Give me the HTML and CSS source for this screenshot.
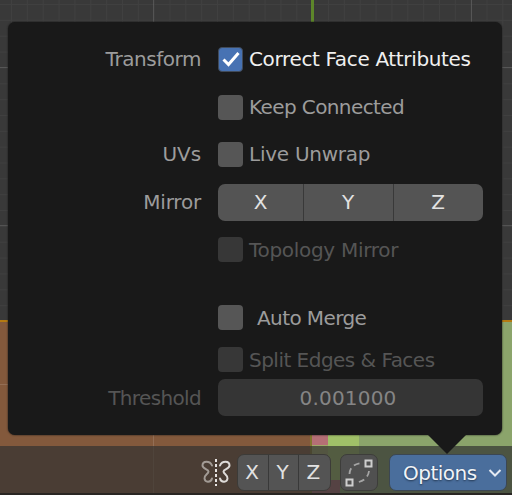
FILE: index.html
```html
<!DOCTYPE html>
<html lang="en">
<head>
<meta charset="utf-8">
<title>Options</title>
<link rel="stylesheet" href="styles.css">
</head>
<body>
<div class="viewport">
  <svg class="scene" width="512" height="495" viewBox="0 0 512 495" shape-rendering="crispEdges" aria-hidden="true">
    <defs>
      <pattern id="minor" x="11" y="4" width="15.85" height="15.85" patternUnits="userSpaceOnUse">
        <path d="M0 .5H15.85M.5 0V15.85" stroke="#fff" stroke-opacity=".035" fill="none"/>
      </pattern>
    </defs>
    <rect width="512" height="495" fill="#393939"/>
    <rect y="321" width="311" height="174" fill="#83593c"/>
    <rect x="311" y="321" width="201" height="174" fill="#8ba46b"/>
    <rect x="328" y="430" width="31" height="50" fill="#a0c068"/>
    <rect x="312" y="430" width="16" height="15" fill="#b56f75"/>
    <rect x="312" y="445" width="16" height="35" fill="#a0a868"/>
    <rect x="310" y="430" width="2" height="65" fill="#84752f"/>
    <rect x="312" y="480" width="28" height="15" fill="#a86a70"/>
    <rect width="512" height="320" fill="url(#minor)"/>
    <path d="M0 320.5H512" stroke="#b47a12" stroke-width="2"/>
    <path d="M153.5 0V495M471.5 0V320M0 67.5H512M0 225.5H512M0 384.5H8" stroke="#fff" stroke-opacity=".13" fill="none"/>
    <path d="M312 0V30" stroke="#5d862a" stroke-width="3"/>
  </svg>

  <footer class="toolbar">
    <svg class="butterfly" width="30" height="30" viewBox="0 0 30 30" fill="none" stroke-width="2" stroke-linecap="round" aria-hidden="true">
      <path d="M11 7.500C9 2.500 1.500 2.500 1.500 7.500C1.500 11 7.500 11 7.500 13.500C7.500 16 3 17 3.500 20.500C4 25 10 24.500 11 20.500" stroke="#a29b95"/>
      <path d="M19 7.500C21 2.500 28.500 2.500 28.500 7.500C28.500 11 22.500 11 22.500 13.500C22.500 16 27 17 26.500 20.500C26 25 20 24.500 19 20.500" stroke="#dedbd8"/>
      <path d="M15 1V28" stroke="#e6e3e1" stroke-linecap="butt" stroke-dasharray="3 2"/>
    </svg>
    <div class="axes small">
      <span>X</span><span>Y</span><span>Z</span>
    </div>
    <div class="merge">
      <svg width="36" height="36" viewBox="0 0 36 36" fill="none" aria-hidden="true">
        <path d="M24.500 5.500h6v6h-6zM5.500 24.500h6v6h-6z" stroke="#cecece" stroke-width="2"/>
        <path d="M8.500 19Q9 9.500 20 8M28 16Q27 25 16 27.500" stroke="#a5a5a5" stroke-width="1.800" stroke-dasharray="6 4"/>
      </svg>
    </div>
    <div class="options">
      <span>Options</span>
      <svg width="14" height="10" viewBox="0 0 14 10" fill="none" aria-hidden="true"><path d="M1.500 2L7 7.500L12.500 2" stroke="#e4eaf2" stroke-width="2"/></svg>
    </div>
  </footer>

  <section class="popover">
    <div class="row"><span class="label transform">Transform</span><i class="box on"><svg width="23" height="23" viewBox="0 0 23 23" fill="none"><path d="M4.500 11.500L9.500 16.500L19.500 5" stroke="#fff" stroke-width="3"/></svg></i><span class="text bright">Correct Face Attributes</span></div>
    <div class="row"><span class="label"></span><i class="box"></i><span class="text keep">Keep Connected</span></div>
    <div class="row"><span class="label uvs">UVs</span><i class="box"></i><span class="text live">Live Unwrap</span></div>
    <div class="row"><span class="label mirror">Mirror</span><div class="axes large"><span>X</span><span>Y</span><span>Z</span></div></div>
    <div class="row dim"><span class="label"></span><i class="box"></i><span class="text topology">Topology Mirror</span></div>
    <div class="row auto"><span class="label"></span><i class="box"></i><span class="text merge-text">Auto Merge</span></div>
    <div class="row dim split"><span class="label"></span><i class="box"></i><span class="text faces">Split Edges &amp; Faces</span></div>
    <div class="row dim threshold"><span class="label threshold-label">Threshold</span><div class="number">0.001000</div></div>
  </section>
</div>
</body>
</html>
```
FILE: styles.css
```css
* { box-sizing: border-box; }
body {
  margin: 0;
  font: 20px/24px "DejaVu Sans", sans-serif;
  letter-spacing: -.45px;
  color: #9c9c9c;
}
.viewport {
  position: relative;
  display: flex;
  flex-direction: column;
  justify-content: flex-end;
  width: 512px;
  height: 495px;
  overflow: hidden;
}
.scene { position: absolute; inset: 0; }
.toolbar {
  position: relative;
  display: flex;
  align-items: flex-start;
  height: 49px;
  padding: 8px 5px 0 201px;
  background: rgba(50, 50, 48, .7);
  border-bottom: 2px solid #292623;
}
.butterfly { flex: none; margin: 4px 6px 0 0; }
.axes { display: flex; overflow: hidden; color: #e2e2e2; background: #545454; }
.axes span { flex: 1; text-align: center; }
.axes span + span { border-left: 1px solid #393939; }
.small {
  width: 94px;
  height: 37px;
  margin-right: 9px;
  padding-right: 1px;
  border: 1px solid #3c3b38;
  border-radius: 7px;
  line-height: 35px;
}
.small span { padding-right: 2px; }
.merge {
  width: 38px;
  height: 37px;
  margin-right: 11px;
  border: 1px solid #3d3d3a;
  border-radius: 7px;
  background: #505050;
}
.merge svg { display: block; }
.options {
  display: flex;
  align-items: center;
  justify-content: space-between;
  width: 118px;
  height: 37px;
  padding: 0 4px 0 13px;
  border: 1px solid #3b4652;
  border-radius: 7px;
  background: #4a6e9c;
  color: #f1f4f8;
  letter-spacing: -.5px;
  text-shadow: 0 1px 2px #20344e;
}
.popover {
  position: absolute;
  left: 8px;
  top: 22px;
  width: 494px;
  height: 413px;
  padding-top: 19px;
  border-radius: 7px;
  background: #191919;
  box-shadow: 0 0 2px #151515;
}
.popover::after {
  content: "";
  position: absolute;
  left: 419px;
  top: 412px;
  width: 40px;
  height: 20px;
  background: #191919;
  clip-path: polygon(0 0, 100% 0, 50% 100%);
}
.row { display: flex; align-items: center; height: 37px; margin-bottom: 10.600px; white-space: nowrap; }
.label { width: 193px; margin-right: 17px; text-align: right; }
.label, .text { position: relative; top: -1px; }
.box { flex: none; width: 25px; height: 25px; margin-right: 6px; border-radius: 4px; background: #565656; }
.on { border: 1px solid #414b5a; background: #4772b3; }
.on svg { display: block; }
.bright { color: #f0f0f0; letter-spacing: -.35px; }
.uvs { letter-spacing: -.1px; }
.keep { top: 0; letter-spacing: -.6px; }
.live { letter-spacing: -.25px; }
.mirror { top: 0; letter-spacing: -.2px; }
.topology { top: 0; letter-spacing: -.3px; }
.large { width: 265px; height: 37px; border-radius: 7px; line-height: 37px; }
.large span:first-child { flex: 0 0 85px; padding-right: 0; }
.large span { padding-right: 1px; }
.dim { color: #555; }
.dim .box { background: #373737; }
.auto { margin-top: 31px; margin-bottom: 5px; }
.merge-text { top: 0; margin-left: 8px; letter-spacing: -.6px; }
.split { margin-bottom: 1px; }
.faces { top: 0; letter-spacing: -.52px; }
.threshold-label { top: 0; letter-spacing: -.65px; }
.number { width: 265px; height: 37px; padding-right: 5px; border-radius: 7px; background: #353535; color: #858585; text-align: center; line-height: 38px; letter-spacing: .2px; }
```
